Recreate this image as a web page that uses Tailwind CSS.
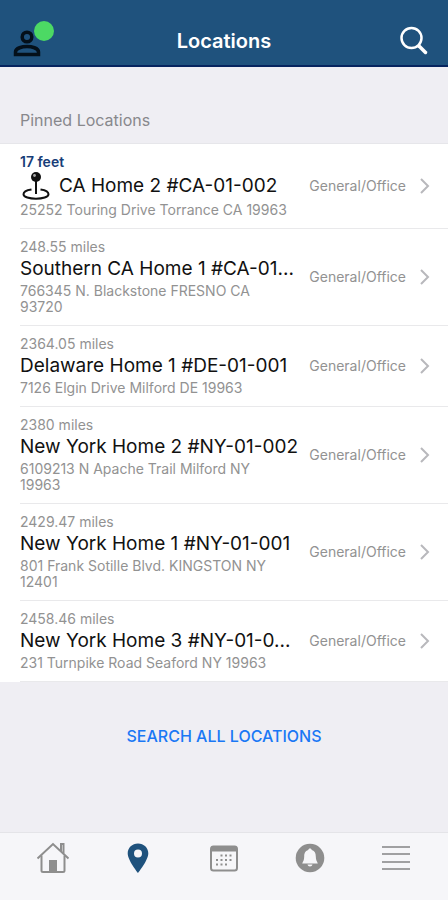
<!DOCTYPE html>
<html lang="en">
<head>
    <meta charset="UTF-8">
    <meta name="viewport" content="width=device-width, initial-scale=1.0">
    <title>Locations</title>
    <script src="https://cdn.jsdelivr.net/npm/@tailwindcss/browser@4"></script>
</head>
<body class="bg-[#efeef3] min-h-screen flex flex-col font-['Inter',sans-serif] text-[#929292]">

    <header class="bg-[#1f527d] border-b-2 border-[#06245f] grid grid-cols-3 items-center pt-[17px] pb-1 px-3">
        <button class="relative justify-self-start w-11 h-11" aria-label="Profile">
            <svg class="w-8 h-11" viewBox="0 0 32 44" fill="none" stroke="#04101a" stroke-width="3.500">
                <circle cx="15" cy="20" r="4.800"/>
                <path d="M3.500 37.500v-2.500c0-4 7-5.500 11.500-5.500s11.500 1.500 11.500 5.500v2.500z"/>
            </svg>
            <span class="absolute top-1 left-5.5 size-5 bg-[#4cd964] rounded-full"></span>
        </button>
        <h1 class="text-xl leading-6 font-semibold text-white text-center pt-1">Locations</h1>
        <button class="justify-self-end w-9 h-11" aria-label="Search">
            <svg class="w-9 h-11" viewBox="0 0 36 44" fill="none" stroke="#fff" stroke-linecap="round">
                <circle cx="11.500" cy="21" r="10" stroke-width="2.500"/>
                <path d="M19 29l6.500 6.500" stroke-width="3.500"/>
            </svg>
        </button>
    </header>

    <main class="flex-1">
        <h2 class="px-5 pt-[41px] pb-[11px] text-base leading-6 text-[#88888c] border-b border-[#e6e6ea]">Pinned Locations</h2>

        <ul class="bg-white pl-5">
            <li class="border-b border-[#e9e9eb]">
                <a href="#" class="flex items-center py-2.5 pr-[18px]">
                    <div class="flex-1 min-w-0">
                        <p class="text-sm leading-4 font-semibold text-[#173d78]">17 feet</p>
                        <div class="flex items-center gap-[7px]">
                            <svg class="w-8 h-8 shrink-0" viewBox="0 0 32 32" fill="none" stroke="#111">
                                <path d="M11.500 19.500C6 20.300 3.500 22 3.500 24.200c0 2.800 6 4.500 12.500 4.500s12.500-1.700 12.500-4.500c0-2.200-2.500-3.900-8-4.700" stroke-width="2"/>
                                <path d="M16 9v15" stroke-width="2"/>
                                <circle cx="16" cy="7" r="5" fill="#111" stroke="none"/>
                                <circle cx="14.500" cy="5.500" r="1.400" fill="#aaa" stroke="none"/>
                            </svg>
                            <h3 class="text-[19px] leading-7 text-[#111] truncate">CA Home 2 #CA-01-002</h3>
                        </div>
                        <p class="text-sm leading-4">25252 Touring Drive Torrance CA 19963</p>
                    </div>
                    <span class="text-sm ml-1">General/Office</span>
                    <svg class="w-3 h-4 ml-3" viewBox="0 0 12 16" fill="none" stroke="#b8b8bc" stroke-width="2"><path d="M3 1l7 7-7 7"/></svg>
                </a>
            </li>
            <li class="border-b border-[#e9e9eb]">
                <a href="#" class="flex items-center py-2.5 pr-[18px]">
                    <div class="flex-1 min-w-0">
                        <p class="text-sm leading-4">248.55 miles</p>
                        <h3 class="text-[19px] leading-7 text-[#111] truncate">Southern CA Home 1 #CA-01...</h3>
                        <p class="text-sm leading-4 pr-8">766345 N. Blackstone FRESNO CA 93720</p>
                    </div>
                    <span class="text-sm ml-1">General/Office</span>
                    <svg class="w-3 h-4 ml-3" viewBox="0 0 12 16" fill="none" stroke="#b8b8bc" stroke-width="2"><path d="M3 1l7 7-7 7"/></svg>
                </a>
            </li>
            <li class="border-b border-[#e9e9eb]">
                <a href="#" class="flex items-center py-2.5 pr-[18px]">
                    <div class="flex-1 min-w-0">
                        <p class="text-sm leading-4">2364.05 miles</p>
                        <h3 class="text-[19px] leading-7 text-[#111] truncate">Delaware Home 1 #DE-01-001</h3>
                        <p class="text-sm leading-4">7126 Elgin Drive Milford DE 19963</p>
                    </div>
                    <span class="text-sm ml-1">General/Office</span>
                    <svg class="w-3 h-4 ml-3" viewBox="0 0 12 16" fill="none" stroke="#b8b8bc" stroke-width="2"><path d="M3 1l7 7-7 7"/></svg>
                </a>
            </li>
            <li class="border-b border-[#e9e9eb]">
                <a href="#" class="flex items-center py-2.5 pr-[18px]">
                    <div class="flex-1 min-w-0">
                        <p class="text-sm leading-4">2380 miles</p>
                        <h3 class="text-[19px] leading-7 text-[#111] truncate">New York Home 2 #NY-01-002</h3>
                        <p class="text-sm leading-4 pr-8">6109213 N Apache Trail Milford NY 19963</p>
                    </div>
                    <span class="text-sm ml-1">General/Office</span>
                    <svg class="w-3 h-4 ml-3" viewBox="0 0 12 16" fill="none" stroke="#b8b8bc" stroke-width="2"><path d="M3 1l7 7-7 7"/></svg>
                </a>
            </li>
            <li class="border-b border-[#e9e9eb]">
                <a href="#" class="flex items-center py-2.5 pr-[18px]">
                    <div class="flex-1 min-w-0">
                        <p class="text-sm leading-4">2429.47 miles</p>
                        <h3 class="text-[19px] leading-7 text-[#111] truncate">New York Home 1 #NY-01-001</h3>
                        <p class="text-sm leading-4 pr-8">801 Frank Sotille Blvd. KINGSTON NY 12401</p>
                    </div>
                    <span class="text-sm ml-1">General/Office</span>
                    <svg class="w-3 h-4 ml-3" viewBox="0 0 12 16" fill="none" stroke="#b8b8bc" stroke-width="2"><path d="M3 1l7 7-7 7"/></svg>
                </a>
            </li>
            <li class="border-b border-[#e9e9eb]">
                <a href="#" class="flex items-center py-2.5 pr-[18px]">
                    <div class="flex-1 min-w-0">
                        <p class="text-sm leading-4">2458.46 miles</p>
                        <h3 class="text-[19px] leading-7 text-[#111] truncate">New York Home 3 #NY-01-0...</h3>
                        <p class="text-sm leading-4">231 Turnpike Road Seaford NY 19963</p>
                    </div>
                    <span class="text-sm ml-1">General/Office</span>
                    <svg class="w-3 h-4 ml-3" viewBox="0 0 12 16" fill="none" stroke="#b8b8bc" stroke-width="2"><path d="M3 1l7 7-7 7"/></svg>
                </a>
            </li>
        </ul>

        <div class="text-center pt-[42px]">
            <button class="text-base leading-6 font-medium text-[#1a78f5]">SEARCH ALL LOCATIONS</button>
        </div>
    </main>

    <nav class="bg-[#f6f6f9] border-t border-[#e4e4e8] flex px-2.5 pt-2 pb-[23px]">
        <a href="#" class="flex-1 flex justify-center" aria-label="Home">
            <svg class="w-9 h-9" viewBox="0 0 36 36" fill="none" stroke="#8e8e8e" stroke-width="2">
                <path d="M2.500 17.500L18 3 33.500 17.500"/>
                <path d="M6.500 14.500v15q0 1.500 1.500 1.500h20q1.500 0 1.500-1.500v-15"/>
                <path d="M26 10V3h2.500v9.500"/>
                <path d="M14 19h8v12h-8z" fill="#8e8e8e" stroke="none"/>
            </svg>
        </a>
        <a href="#" class="flex-1 flex justify-center" aria-label="Locations">
            <svg class="w-9 h-9" viewBox="0 0 36 36" fill="#1f527d">
                <path fill-rule="evenodd" d="M18 2.500c-5.800 0-10.300 4.400-10.300 9.800C7.700 19.500 18 32 18 32s10.300-12.500 10.300-19.700C28.300 6.900 23.800 2.500 18 2.500zm0 6a4 4 0 1 1 0 8 4 4 0 0 1 0-8z"/>
            </svg>
        </a>
        <a href="#" class="flex-1 flex justify-center" aria-label="Calendar">
            <svg class="w-9 h-9" viewBox="0 0 36 36" fill="none" stroke="#8e8e8e">
                <rect x="5" y="5.500" width="26" height="24" rx="2.500" stroke-width="2"/>
                <path d="M5 5.500h26v5H5z" fill="#8e8e8e" stroke="none"/>
                <path d="M14.500 14.500h12M10 19h16M10 23.500h11.500" stroke-width="2" stroke-dasharray="2 2.500"/>
            </svg>
        </a>
        <a href="#" class="flex-1 flex justify-center" aria-label="Notifications">
            <svg class="w-9 h-9" viewBox="0 0 36 36">
                <circle cx="18" cy="17" r="14.300" fill="#8e8e8e"/>
                <path d="M18 7.500c1 0 1.600.600 1.800 1.500 3.200 1 4 3.500 4 6.500 0 3.500 1 4.500 2 7h-15.600c1-2.500 2-3.500 2-7 0-3 .800-5.500 4-6.500C16.400 8.100 17 7.500 18 7.500zM15.500 23.500h5c-.300 1.300-1.200 2-2.500 2s-2.200-.700-2.500-2z" fill="#f6f6f9"/>
            </svg>
        </a>
        <a href="#" class="flex-1 flex justify-center" aria-label="Menu">
            <svg class="w-9 h-9" viewBox="0 0 36 36" stroke="#a0a0a2" stroke-width="2">
                <path d="M5 6h28M5 13h28M5 21h28M5 28h28"/>
            </svg>
        </a>
    </nav>

</body>
</html>
